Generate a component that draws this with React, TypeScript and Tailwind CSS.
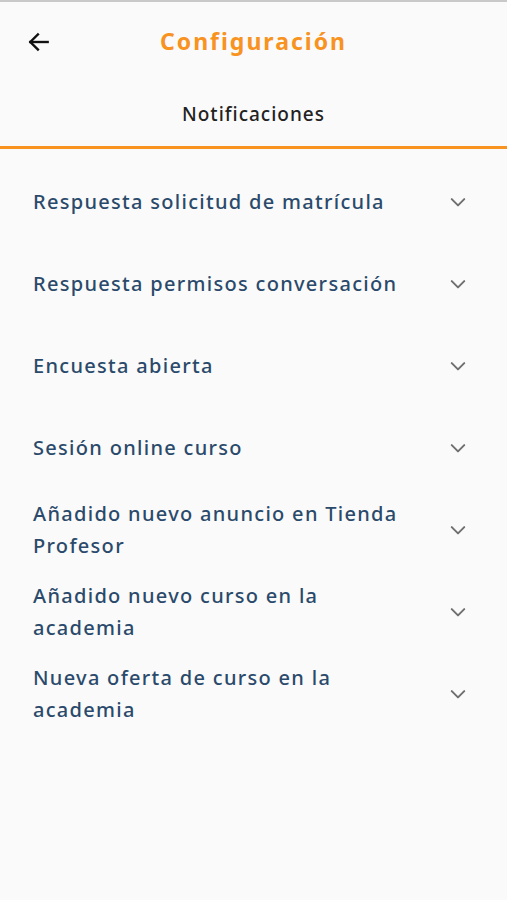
import React from "react";

const items: string[][] = [
  ["Respuesta solicitud de matrícula"],
  ["Respuesta permisos conversación"],
  ["Encuesta abierta"],
  ["Sesión online curso"],
  ["Añadido nuevo anuncio en Tienda", "Profesor"],
  ["Añadido nuevo curso en la", "academia"],
  ["Nueva oferta de curso en la", "academia"],
];

function Chevron() {
  return (
    <svg width="20" height="20" viewBox="0 0 24 24" fill="none" stroke="#6f6f6f" strokeWidth="2.4" strokeLinecap="round" strokeLinejoin="round">
      <path d="M4.5 8.5l7.5 7.5 7.5-7.5" />
    </svg>
  );
}

export default function App() {
  return (
    <div className="min-h-[900px] w-full bg-[#fafafa] border-t-2 border-[#c9c9c9]" style={{ fontFamily: '"Noto Sans", "Open Sans", sans-serif' }}>
      <div className="relative h-[80px] flex items-center justify-center pb-[2px]">
        <div className="absolute left-[26px] top-[27px]">
          <svg width="26" height="26" viewBox="0 0 24 24" fill="none" stroke="#111" strokeWidth="2.2" strokeLinecap="square" strokeLinejoin="miter">
            <path d="M20 12H4" />
            <path d="M11 5l-7 7 7 7" />
          </svg>
        </div>
        <span className="text-[23px] font-bold tracking-[2px] text-[#f7931e]">Configuración</span>
      </div>
      <div className="h-[67px] flex items-center justify-center border-b-[3px] border-[#f7931e]">
        <span className="text-[19px] font-medium tracking-[1px] text-[#222]">Notificaciones</span>
      </div>
      <div className="flex flex-col pt-[12px]">
        {items.map((lines, i) => (
          <div key={i} className="h-[82px] flex items-center justify-between pl-[33px] pr-[39px]">
            <div className="text-[20px] leading-[32px] font-medium tracking-[1.3px] text-[#2b4a6b]">
              {lines.map((l, j) => (
                <div key={j}>{l}</div>
              ))}
            </div>
            <Chevron />
          </div>
        ))}
      </div>
    </div>
  );
}
